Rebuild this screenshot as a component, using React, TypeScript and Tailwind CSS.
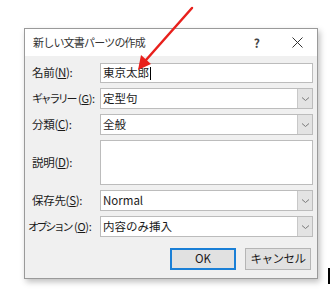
const font = { fontFamily: '"Noto Sans CJK JP", "Noto Sans", sans-serif' };

function Chevron() {
  return (
    <svg width="9" height="6" viewBox="0 0 9 6" className="text-[#7a7a7a]">
      <path d="M1 1.5l3.5 3 3.5-3" fill="none" stroke="currentColor" strokeWidth="1" />
    </svg>
  );
}

function Label({ text, k }: { text: string; k: string }) {
  return (
    <div className="w-[68px] shrink-0 whitespace-nowrap text-[11.5px] tracking-[-0.3px] text-[#1a1a1a]">
      {text}(<span className="underline">{k}</span>):
    </div>
  );
}

// katakana labels are narrower in the original UI font
function NarrowLabel({ text, k, shift }: { text: string; k: string; shift?: boolean }) {
  return (
    <div
      className={
        shift
          ? "-ml-[4px] w-[72px] shrink-0 whitespace-nowrap text-[11px] text-[#1a1a1a]"
          : "w-[68px] shrink-0 whitespace-nowrap text-[11px] text-[#1a1a1a]"
      }
    >
      <span className="tracking-[-2.4px]">{text}</span>
      <span className="ml-[3px] tracking-[-0.3px]">
        (<span className="underline">{k}</span>):
      </span>
    </div>
  );
}

function Select({ value }: { value: string }) {
  return (
    <div className="flex h-[21px] w-[213px] items-stretch border border-[#bcbcbc] bg-white">
      <div className="flex flex-1 items-center pl-[2px] text-[11.5px] text-[#1a1a1a]">{value}</div>
      <div className="flex w-[15px] items-center justify-center border-l border-[#c8c8c8] bg-[#e3e3e3]">
        <Chevron />
      </div>
    </div>
  );
}

export default function App() {
  return (
    <div className="relative h-[294px] w-[330px] overflow-hidden bg-white" style={font}>
      <div className="pl-[24px] pt-[28px]">
        <div className="flex h-[251px] w-[294px] flex-col border border-[#9a9a9a] bg-[#f0f0f0] shadow-[2px_3px_6px_rgba(0,0,0,0.25)]">
          <div className="flex h-[27px] items-center bg-white pl-[8px] pr-[14px] text-[11px] tracking-[-0.8px] text-[#333]">
            <span className="flex-1">新しい文書パーツの作成</span>
            <span className="mr-[33px] text-[12px] font-semibold text-[#444]">?</span>
            <svg width="11" height="11" viewBox="0 0 11 11">
              <path d="M0.5 0.5l10 10M10.5 0.5l-10 10" stroke="#333" strokeWidth="1" />
            </svg>
          </div>
          <div className="flex flex-col gap-[5px] pl-[7px] pt-[7px]">
            <div className="flex items-center">
              <Label text="名前" k="N" />
              <div className="flex h-[20px] w-[213px] items-center border border-[#bcbcbc] bg-white pl-[2px] text-[11.5px] text-[#1a1a1a]">
                東京太郎<span className="ml-[1px] inline-block h-[13px] w-[1px] bg-black" />
              </div>
            </div>
            <div className="flex items-center">
              <NarrowLabel text="ギャラリー" k="G" />
              <Select value="定型句" />
            </div>
            <div className="flex items-center">
              <Label text="分類" k="C" />
              <Select value="全般" />
            </div>
            <div className="flex items-center">
              <Label text="説明" k="D" />
              <div className="h-[45px] w-[213px] border border-[#bcbcbc] bg-white" />
            </div>
            <div className="flex items-center">
              <Label text="保存先" k="S" />
              <Select value="Normal" />
            </div>
            <div className="flex items-center">
              <NarrowLabel text="オプション" k="O" shift />
              <Select value="内容のみ挿入" />
            </div>
          </div>
          <div className="mt-[11px] flex justify-end gap-[9px] pr-[6px]">
            <button className="flex h-[22px] w-[66px] items-center justify-center border-2 border-[#1a7fd6] bg-[#e1e1e1] text-[11.5px] text-[#1a1a1a]">
              OK
            </button>
            <button className="flex h-[22px] w-[66px] items-center justify-center border border-[#b5b5b5] bg-[#e1e1e1] text-[11.5px] tracking-[-0.5px] text-[#1a1a1a]">
              キャンセル
            </button>
          </div>
        </div>
      </div>
      <svg className="absolute left-0 top-0" width="330" height="294" viewBox="0 0 330 294">
        <line x1="192" y1="8" x2="146" y2="60" stroke="#e8201c" strokeWidth="2.5" strokeLinecap="round" />
        <polygon points="138,70 141,55 151,64" fill="#e8201c" />
      </svg>
      <div className="absolute left-[328px] top-[268px] h-[16px] w-[2px] bg-black" />
    </div>
  );
}
